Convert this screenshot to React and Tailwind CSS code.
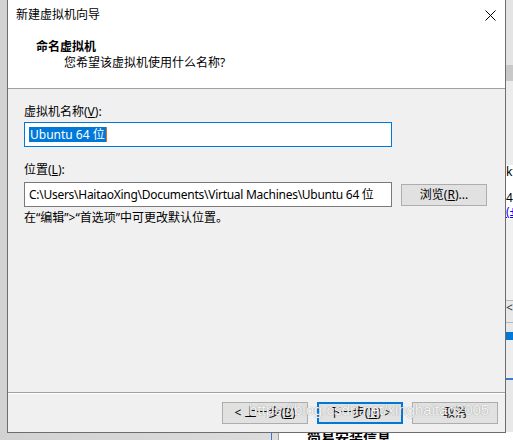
import React from "react";

const font = { fontFamily: '"Noto Sans", "Noto Sans CJK SC", sans-serif' };

function Btn({ children, primary, className = "" }) {
  return (
    <div
      className={
        "w-[86px] h-[22px] flex items-center justify-center text-[12px] text-black " +
        (primary
          ? "border-2 border-[#0078d7] bg-[#e1e1e1]"
          : "border border-[#adadad] bg-[#e1e1e1]") +
        " " +
        className
      }
    >
      {children}
    </div>
  );
}

export default function App() {
  return (
    <div
      className="relative w-[513px] h-[440px] overflow-hidden bg-gradient-to-r from-[#d2d2d2] to-[#e4e4e4] leading-[16px]"
      style={font}
    >
      {/* background window behind the dialog (right strip) */}
      <div className="absolute left-[506px] top-0 w-[7px] h-[440px] flex flex-col bg-[#e8e8e8] text-[12px] leading-[14px]">
        <div className="h-[65px] bg-[#e4e4e4]" />
        <div className="h-[16px] bg-[#c9c9c9]" />
        <div className="h-[84px] bg-[#ececec]" />
        <div className="h-[14px] bg-white overflow-hidden whitespace-nowrap">kt</div>
        <div className="h-[12px] bg-white" />
        <div className="h-[14px] bg-white overflow-hidden whitespace-nowrap">4.</div>
        <div className="h-[14px] bg-white text-[#0000ff] overflow-hidden whitespace-nowrap underline">(±</div>
        <div className="h-[82px] bg-[#f0f0f0] border-b border-[#b8b8b8]" />
        <div className="h-[22px] bg-[#e8e8e8] text-[#333] overflow-hidden border-b border-[#b8b8b8]">&lt;</div>
        <div className="h-[9px] bg-[#e8e8e8]" />
        <div className="h-[8px] bg-[#0078d7]" />
        <div className="h-[38px] bg-[#ededed]" />
        <div className="h-[2px] bg-[#3c78c8]" />
        <div className="flex-1 bg-[#e8e8e8]" />
      </div>

      {/* background window behind the dialog (bottom) */}
      <div className="absolute left-[271px] top-[432px] w-[242px] h-[8px] flex">
        <div className="w-[1px] bg-[#3c78c8]" />
        <div className="w-[6px] bg-[#dcdcdc]" />
        <div className="w-[1px] bg-[#a0a0a0]" />
        <div className="flex-1 bg-white relative overflow-hidden">
          <div className="absolute left-[28px] top-[-2px] text-[14px] font-bold text-black leading-[16px]">
            简易安装信息
          </div>
        </div>
      </div>

      {/* dialog window */}
      <div className="absolute left-[7px] top-0 w-[499px] h-[433px] border border-t-0 border-[#6d6d6d] bg-[#f0f0f0] flex flex-col">
        {/* header */}
        <div className="h-[89px] bg-white border-b border-[#a0a0a0] flex flex-col">
          <div className="h-[30px] flex items-center justify-between pl-[8px] pr-[9px]">
            <span className="text-[12px] text-black">新建虚拟机向导</span>
            <svg width="11" height="11" viewBox="0 0 11 11">
              <path d="M0.5 0.5 L10.5 10.5 M10.5 0.5 L0.5 10.5" stroke="#000" strokeWidth="1" />
            </svg>
          </div>
          <div className="mt-[9px] pl-[28px] text-[12px] font-bold text-black">命名虚拟机</div>
          <div className="pl-[56px] text-[12px] text-black">您希望该虚拟机使用什么名称?</div>
        </div>

        {/* body */}
        <div className="flex-1 flex flex-col pt-[15px] pl-[16px] text-[12px] text-black">
          <div>
            虚拟机名称(<span className="underline">V</span>):
          </div>
          <div className="mt-[2px] w-[368px] h-[25px] border border-[#0078d7] bg-white flex items-center pl-[4px]">
            <span className="bg-[#0078d7] text-white leading-[15px] px-[1px]">Ubuntu 64 位</span>
            <span className="w-[1px] h-[15px] bg-[#e07020]" />
          </div>

          <div className="mt-[15px]">
            位置(<span className="underline">L</span>):
          </div>
          <div className="mt-[4px] flex items-center gap-[9px]">
            <div className="w-[368px] h-[25px] border border-[#7a7a7a] bg-white flex items-center pl-[4px] whitespace-nowrap overflow-hidden tracking-[-0.27px]">
              C:\Users\HaitaoXing\Documents\Virtual Machines\Ubuntu 64 位
            </div>
            <div className="w-[86px] h-[22px] border border-[#adadad] bg-[#e1e1e1] flex items-center justify-center">
              浏览(<span className="underline">R</span>)...
            </div>
          </div>
          <div className="mt-[3px]">在“编辑”&gt;“首选项”中可更改默认位置。</div>
        </div>

        {/* footer */}
        <div className="h-[40px] border-t border-[#a0a0a0] shadow-[inset_0_1px_0_#ffffff] flex items-start justify-end gap-[9px] pt-[9px] pr-[7px] relative">
          <Btn>
            &lt; 上一步(<span className="underline">B</span>)
          </Btn>
          <Btn primary>
            下一步(<span className="underline">N</span>) &gt;
          </Btn>
          <Btn>取消</Btn>
          <div
            className="absolute left-[241px] top-[9px] text-[15px] text-white/90 whitespace-nowrap pointer-events-none"
            style={{
              fontFamily: '"Liberation Sans", Arial, sans-serif',
              textShadow: "0 0 1px rgba(110,110,110,0.55), 0 0 1px rgba(110,110,110,0.4)",
            }}
          >
            https://blog.csdn.net/xinghaitao2005
          </div>
        </div>
      </div>
    </div>
  );
}
